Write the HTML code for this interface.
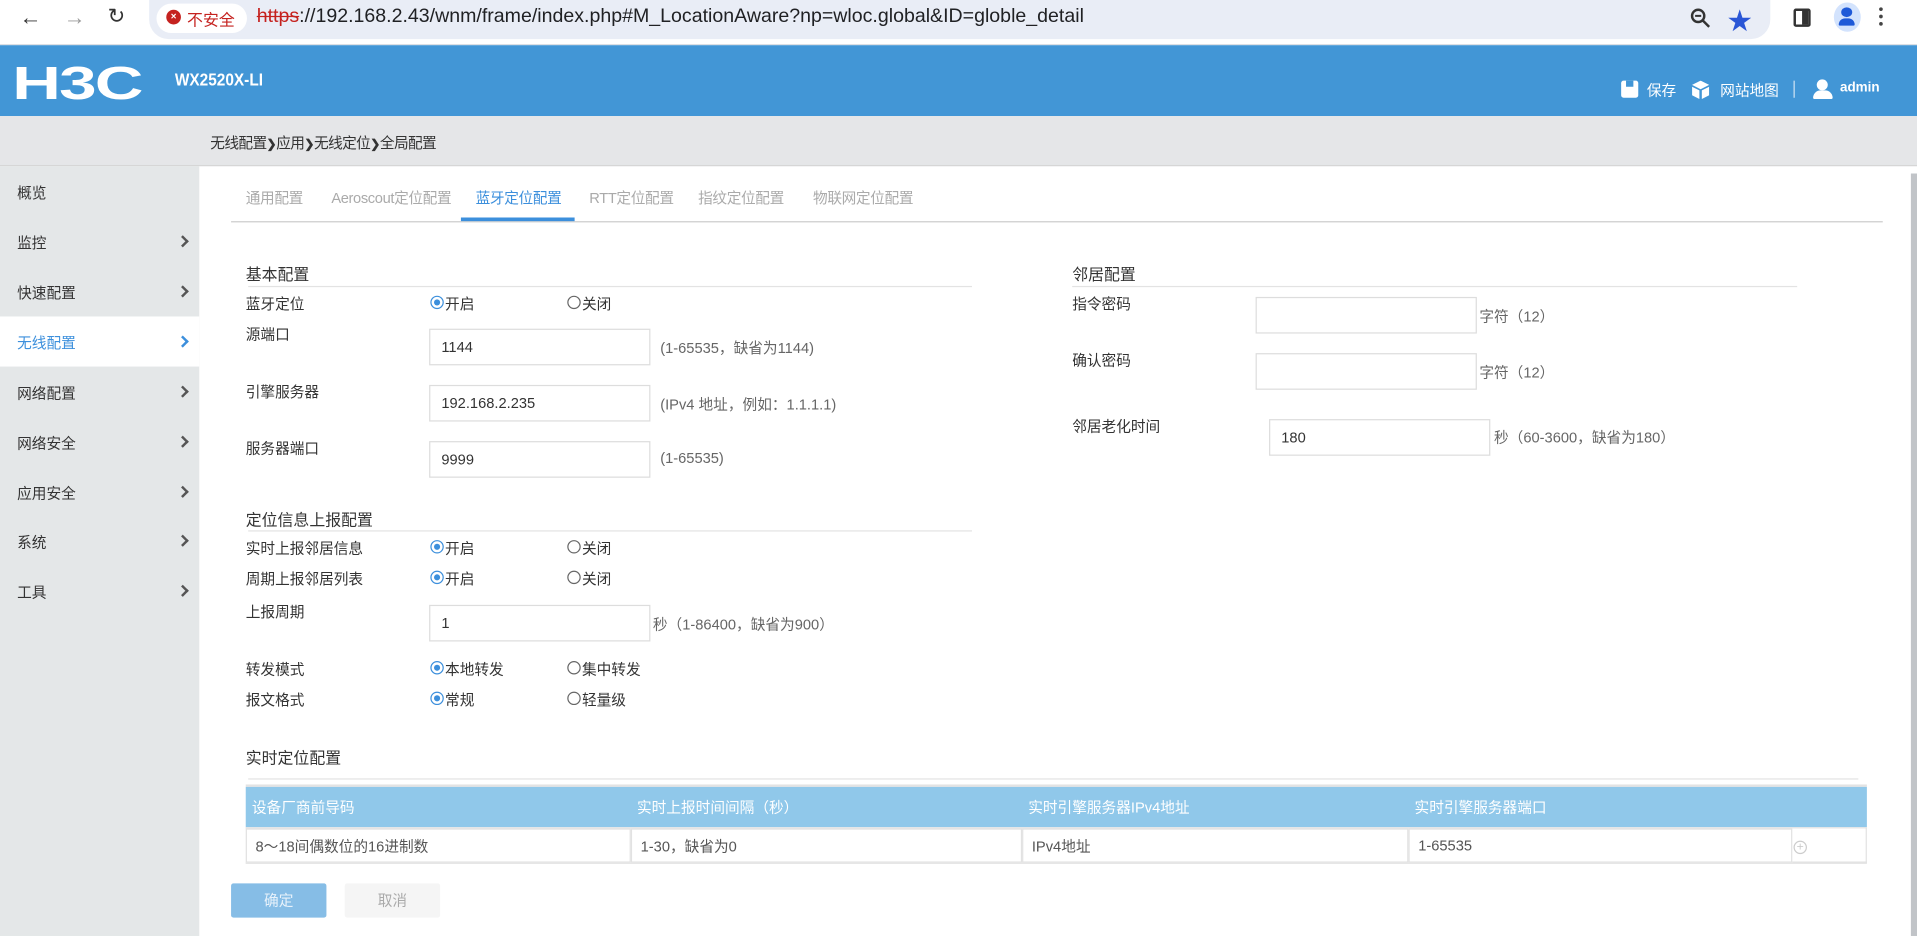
<!DOCTYPE html>
<html><head><meta charset="utf-8"><style>
*{margin:0;padding:0;box-sizing:border-box}
html,body{width:1917px;height:936px;overflow:hidden;background:#fff;font-family:"Liberation Sans","Noto Sans CJK SC",sans-serif}
#s{position:absolute;left:0;top:0;width:1568px;height:766px;transform:scale(1.22258,1.2219);transform-origin:0 0;font-size:12px;color:#333}
.a{position:absolute;white-space:nowrap}
.lbl{font-size:12px;color:#333}
.hint{font-size:12px;color:#666}
.inp{position:absolute;border:1px solid #ddd;background:#fff;font-size:12px;color:#333;padding-left:9px;display:flex;align-items:center}
.rd{position:absolute;width:11px;height:11px;border-radius:50%;border:1px solid #666;background:#fff}
.rd.on{border-color:#3c8fdc}
.rd.on::after{content:"";position:absolute;left:2px;top:2px;width:5px;height:5px;border-radius:50%;background:#3c8fdc}
.side{position:absolute;left:14px;font-size:12px;color:#333}
.arr{position:absolute;left:146px;width:7px;height:7px;border-right:2px solid #555;border-top:2px solid #555;transform:rotate(45deg)}
.tab{position:absolute;top:153px;font-size:12px;color:#aaa;letter-spacing:-0.3px}
.th{position:absolute;top:652px;color:#fff;font-size:12px}
.cell{position:absolute;top:678px;height:28px;border:1px solid #e2e2e2;background:#fff;font-size:12px;color:#555;padding-left:7px;display:flex;align-items:center}
</style></head><body><div id="s">
<div class="a" style="left:0;top:0;width:1568px;height:37px;background:#fff;border-bottom:1px solid #dcdfe4"></div>
<div class="a" style="left:122px;top:0;width:1326px;height:32px;background:#e9edf6;border-radius:0 0 16px 16px"></div>
<div class="a" style="left:16px;top:4px;font-size:18px;color:#333">←</div>
<div class="a" style="left:52px;top:4px;font-size:18px;color:#999">→</div>
<div class="a" style="left:88px;top:4px;font-size:17px;color:#333">↻</div>
<div class="a" style="left:128px;top:3px;width:74px;height:24px;background:#fff;border-radius:12px"></div>
<div class="a" style="left:136px;top:8px;width:12px;height:12px;border-radius:50%;background:#c5221f;color:#fff;font-size:8px;line-height:12px;text-align:center;font-weight:bold">×</div>
<div class="a" style="left:153px;top:6px;font-size:13px;color:#c5221f">不安全</div>
<div class="a" style="left:210px;top:5px;font-size:16px;color:#202124"><span style="color:#c5221f;text-decoration:line-through">https</span>://192.168.2.43/wnm/frame/index.php#M_LocationAware?np=wloc.global&amp;ID=globle_detail</div>
<svg class="a" style="left:1382px;top:6px" width="18" height="18" viewBox="0 0 18 18"><circle cx="7" cy="7" r="5" fill="none" stroke="#333" stroke-width="2"/><line x1="11" y1="11" x2="16" y2="16" stroke="#333" stroke-width="2"/><line x1="4.5" y1="7" x2="9.5" y2="7" stroke="#333" stroke-width="1.6"/></svg>
<div class="a" style="left:1413px;top:1px;font-size:20px;color:#2a56d6">★</div>
<div class="a" style="left:1467px;top:7px;width:14px;height:15px;border:2px solid #333;border-radius:2px"><div style="position:absolute;right:0;top:0;width:5px;height:11px;background:#333"></div></div>
<div class="a" style="left:1500px;top:2px;width:22px;height:24px;border-radius:50%;background:#d3e3fd"></div>
<div class="a" style="left:1506px;top:6px;width:9px;height:8px;border-radius:50%;background:#1f5ad8"></div>
<div class="a" style="left:1504px;top:15px;width:13px;height:6px;border-radius:6px 6px 1px 1px;background:#1f5ad8"></div>
<div class="a" style="left:1537px;top:6px;width:3px;height:3px;border-radius:50%;background:#444"></div>
<div class="a" style="left:1537px;top:12px;width:3px;height:3px;border-radius:50%;background:#444"></div>
<div class="a" style="left:1537px;top:18px;width:3px;height:3px;border-radius:50%;background:#444"></div>
<div class="a" style="left:0;top:37px;width:1568px;height:58px;background:#4296d6"></div>
<div class="a" style="left:10px;top:47px;font-size:38px;font-weight:bold;color:#fff;letter-spacing:-1px;transform:scale(1.45,1.0);transform-origin:0 0;line-height:44px">H3C</div>
<div class="a" style="left:143px;top:57px;font-size:14px;font-weight:bold;color:#fff;transform:scaleX(0.9);transform-origin:0 0">WX2520X-LI</div>
<div class="a" style="left:1326px;top:66px;width:14px;height:14px;background:#fff;border-radius:2px"><div style="position:absolute;left:4px;top:0;width:6px;height:5px;background:#4296d6"></div></div>
<div class="a" style="left:1347px;top:65px;font-size:12px;color:#fff">保存</div>
<svg class="a" style="left:1384px;top:66px" width="14" height="15" viewBox="0 0 14 15"><path d="M7 0L14 3.5L7 7L0 3.5Z" fill="#fff"/><path d="M0 5L6 8V15L0 12Z M14 5L8 8V15L14 12Z" fill="#fff"/></svg>
<div class="a" style="left:1407px;top:65px;font-size:12px;color:#fff">网站地图</div>
<div class="a" style="left:1467px;top:66px;width:1px;height:14px;background:#cfe3f4"></div>
<div class="a" style="left:1486px;top:65px;width:9px;height:9px;border-radius:50%;background:#fff"></div>
<div class="a" style="left:1483px;top:74px;width:16px;height:7px;border-radius:7px 7px 1px 1px;background:#fff"></div>
<div class="a" style="left:1505px;top:66px;font-size:11px;color:#fff;font-weight:bold">admin</div>
<div class="a" style="left:0;top:95px;width:1568px;height:41px;background:#e5e6e8;border-bottom:1px solid #d6d6d6"></div>
<div class="a" style="left:172px;top:108px;font-size:12px;color:#333;letter-spacing:-0.5px">无线配置<b style="font-size:10px">❯</b>应用<b style="font-size:10px">❯</b>无线定位<b style="font-size:10px">❯</b>全局配置</div>
<div class="a" style="left:0;top:136px;width:163px;height:630px;background:#e4e7e8"></div>
<div class="a" style="left:0;top:259px;width:163px;height:41px;background:#fff"></div>
<div class="side" style="top:149px">概览</div>
<div class="side" style="top:190px">监控</div><div class="arr" style="top:194px"></div>
<div class="side" style="top:231px">快速配置</div><div class="arr" style="top:235px"></div>
<div class="side" style="top:272px;color:#3c8fdc">无线配置</div><div class="arr" style="top:276px;border-color:#3c8fdc"></div>
<div class="side" style="top:313px">网络配置</div><div class="arr" style="top:317px"></div>
<div class="side" style="top:354px">网络安全</div><div class="arr" style="top:358px"></div>
<div class="side" style="top:395px">应用安全</div><div class="arr" style="top:399px"></div>
<div class="side" style="top:435px">系统</div><div class="arr" style="top:439px"></div>
<div class="side" style="top:476px">工具</div><div class="arr" style="top:480px"></div>
<div class="a" style="left:1563px;top:142px;width:5px;height:624px;background:#c1c4c8"></div>
<div class="tab" style="left:201px">通用配置</div>
<div class="tab" style="left:271px">Aeroscout定位配置</div>
<div class="tab" style="left:389px;color:#3c8fdc">蓝牙定位配置</div>
<div class="tab" style="left:482px">RTT定位配置</div>
<div class="tab" style="left:571px">指纹定位配置</div>
<div class="tab" style="left:665px">物联网定位配置</div>
<div class="a" style="left:189px;top:181px;width:1351px;height:1px;background:#ccc"></div>
<div class="a" style="left:377px;top:178px;width:93px;height:3px;background:#3c8fdc"></div>
<div class="a" style="left:201px;top:214px;font-size:13px;color:#333">基本配置</div>
<div class="a" style="left:203px;top:234px;width:592px;height:1px;background:#e3e3e3"></div>
<div class="a lbl" style="left:201px;top:240px">蓝牙定位</div>
<div class="rd on" style="left:352px;top:242px"></div><div class="a lbl" style="left:364px;top:240px">开启</div>
<div class="rd" style="left:464px;top:242px"></div><div class="a lbl" style="left:476px;top:240px">关闭</div>
<div class="a lbl" style="left:201px;top:265px">源端口</div>
<div class="inp" style="left:351px;top:269px;width:181px;height:30px">1144</div>
<div class="a hint" style="left:540px;top:276px">(1-65535，缺省为1144)</div>
<div class="a lbl" style="left:201px;top:312px">引擎服务器</div>
<div class="inp" style="left:351px;top:315px;width:181px;height:30px">192.168.2.235</div>
<div class="a hint" style="left:540px;top:322px">(IPv4 地址，例如：1.1.1.1)</div>
<div class="a lbl" style="left:201px;top:358px">服务器端口</div>
<div class="inp" style="left:351px;top:361px;width:181px;height:30px">9999</div>
<div class="a hint" style="left:540px;top:368px">(1-65535)</div>
<div class="a" style="left:201px;top:415px;font-size:13px;color:#333">定位信息上报配置</div>
<div class="a" style="left:203px;top:434px;width:592px;height:1px;background:#e3e3e3"></div>
<div class="a lbl" style="left:201px;top:440px">实时上报邻居信息</div>
<div class="rd on" style="left:352px;top:442px"></div><div class="a lbl" style="left:364px;top:440px">开启</div>
<div class="rd" style="left:464px;top:442px"></div><div class="a lbl" style="left:476px;top:440px">关闭</div>
<div class="a lbl" style="left:201px;top:465px">周期上报邻居列表</div>
<div class="rd on" style="left:352px;top:467px"></div><div class="a lbl" style="left:364px;top:465px">开启</div>
<div class="rd" style="left:464px;top:467px"></div><div class="a lbl" style="left:476px;top:465px">关闭</div>
<div class="a lbl" style="left:201px;top:492px">上报周期</div>
<div class="inp" style="left:351px;top:495px;width:181px;height:30px">1</div>
<div class="a hint" style="left:534px;top:502px">秒（1-86400，缺省为900）</div>
<div class="a lbl" style="left:201px;top:539px">转发模式</div>
<div class="rd on" style="left:352px;top:541px"></div><div class="a lbl" style="left:364px;top:539px">本地转发</div>
<div class="rd" style="left:464px;top:541px"></div><div class="a lbl" style="left:476px;top:539px">集中转发</div>
<div class="a lbl" style="left:201px;top:564px">报文格式</div>
<div class="rd on" style="left:352px;top:566px"></div><div class="a lbl" style="left:364px;top:564px">常规</div>
<div class="rd" style="left:464px;top:566px"></div><div class="a lbl" style="left:476px;top:564px">轻量级</div>
<div class="a" style="left:877px;top:214px;font-size:13px;color:#333">邻居配置</div>
<div class="a" style="left:877px;top:234px;width:593px;height:1px;background:#e3e3e3"></div>
<div class="a lbl" style="left:877px;top:240px">指令密码</div>
<div class="inp" style="left:1027px;top:243px;width:181px;height:30px"></div>
<div class="a hint" style="left:1210px;top:250px">字符（12）</div>
<div class="a lbl" style="left:877px;top:286px">确认密码</div>
<div class="inp" style="left:1027px;top:289px;width:181px;height:30px"></div>
<div class="a hint" style="left:1210px;top:296px">字符（12）</div>
<div class="a lbl" style="left:877px;top:340px">邻居老化时间</div>
<div class="inp" style="left:1038px;top:343px;width:181px;height:30px">180</div>
<div class="a hint" style="left:1222px;top:349px">秒（60-3600，缺省为180）</div>
<div class="a" style="left:201px;top:610px;font-size:13px;color:#333">实时定位配置</div>
<div class="a" style="left:203px;top:637px;width:1317px;height:1px;background:#e3e3e3"></div>
<div class="a" style="left:201px;top:642px;width:1326px;height:2px;background:#e3e3e3"></div>
<div class="a" style="left:201px;top:644px;width:1326px;height:33px;background:#90c8ea"></div>
<div class="th" style="left:206px">设备厂商前导码</div>
<div class="th" style="left:521px">实时上报时间间隔（秒）</div>
<div class="th" style="left:841px">实时引擎服务器IPv4地址</div>
<div class="th" style="left:1157px">实时引擎服务器端口</div>
<div class="a" style="left:201px;top:677px;width:1326px;height:30px;background:#fff;border:1px solid #e2e2e2;border-bottom:2px solid #e3e3e3"></div>
<div class="cell" style="left:201px;width:315px">8～18间偶数位的16进制数</div>
<div class="cell" style="left:516px;width:320px">1-30，缺省为0</div>
<div class="cell" style="left:836px;width:316px">IPv4地址</div>
<div class="cell" style="left:1152px;width:314px">1-65535</div>
<div class="a" style="left:1467px;top:688px;width:11px;height:11px;border:1px solid #ccc;border-radius:50%;color:#ccc;font-size:10px;line-height:9px;text-align:center">+</div>
<div class="a" style="left:189px;top:723px;width:78px;height:28px;background:#86bde6;border-radius:2px;color:#e8f2fb;font-size:12px;text-align:center;line-height:28px">确定</div>
<div class="a" style="left:282px;top:723px;width:78px;height:28px;background:#f5f5f5;border-radius:2px;color:#aaa;font-size:12px;text-align:center;line-height:28px">取消</div>
</div></body></html>
